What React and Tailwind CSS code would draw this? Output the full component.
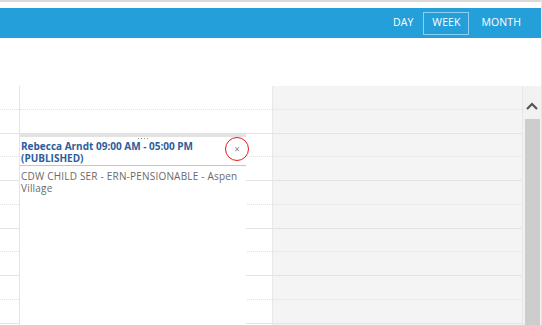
import React from 'react';

const rows = [0, 1, 2, 3, 4];

const Slots = () => (
  <>
    {rows.map((r) => (
      <div key={r} className="h-[47.5px] shrink-0 flex flex-col">
        <div className="h-[23.75px] border-b border-dotted border-[#e2e2e2]" />
        <div className="h-[23.75px] border-b border-[#e4e4e4]" />
      </div>
    ))}
  </>
);

const App = () => {
  return (
    <div className="w-[542px] h-[325px] overflow-hidden bg-white flex flex-col border-r border-[#e4e4e4] font-['Open_Sans','Noto_Sans',sans-serif]">
      <div className="h-[2px] bg-[#dadada] shrink-0" />
      <div className="h-[6px] shrink-0" />
      <div className="h-[30px] shrink-0 bg-[#259fd9] flex items-center justify-end pr-[20px] text-white text-[10.5px] tracking-[0.1px]">
        <button className="h-[23px]">DAY</button>
        <button className="ml-[10px] w-[46px] h-[23px] border border-[#8ed0f0]">WEEK</button>
        <button className="ml-[12px] h-[23px]">MONTH</button>
      </div>
      <div className="h-[48px] shrink-0" />
      <div className="flex flex-1 min-h-0">
        <div className="w-[20px] border-r border-[#e4e4e4] flex flex-col">
          <Slots />
        </div>
        <div className="relative w-[252px] flex flex-col">
          <Slots />
          <div className="absolute left-0 top-[47px] w-[226px] h-[200px] bg-white">
            <div className="h-[4px] bg-[#e3e3e3]" />
            <div className="flex justify-center gap-[2px] mt-[1px] ml-[20px] h-[1px]">
              <span className="w-[1px] h-[1px] bg-[#999]" />
              <span className="w-[1px] h-[1px] bg-[#999]" />
              <span className="w-[1px] h-[1px] bg-[#999]" />
              <span className="w-[1px] h-[1px] bg-[#999]" />
            </div>
            <div className="pl-[1px] pt-[1px] pb-[1px] text-[10px] leading-[12px] font-bold text-[#2c5d9c] border-b border-[#a9cbf2]">
              <p>Rebecca Arndt 09:00 AM - 05:00 PM</p>
              <p>(PUBLISHED)</p>
            </div>
            <div className="pl-[1px] pt-[4px] text-[10px] leading-[12px] text-[#6a6a6a] tracking-[0.2px]">
              CDW CHILD SER - ERN-PENSIONABLE - Aspen Village
            </div>
            <button className="absolute left-[205px] top-[4px] w-[24px] h-[24px] rounded-full border border-[#e01b1b] flex items-center justify-center text-[#888] text-[10px] leading-none">
              ×
            </button>
          </div>
        </div>
        <div className="flex-1 bg-[#f4f4f4] border-l border-[#e8e8e8] flex flex-col">
          <Slots />
        </div>
        <div className="w-[19px] bg-[#f2f2f2] border-l border-[#e8e8e8] flex flex-col items-center">
          <svg className="mt-[16px]" width="12" height="8" viewBox="0 0 12 8">
            <path d="M1 7 L6 2 L11 7" fill="none" stroke="#555" strokeWidth="2.2" />
          </svg>
          <div className="mt-[9px] w-[15px] flex-1 bg-[#cdcdcd]" />
        </div>
      </div>
    </div>
  );
};

export default App;
